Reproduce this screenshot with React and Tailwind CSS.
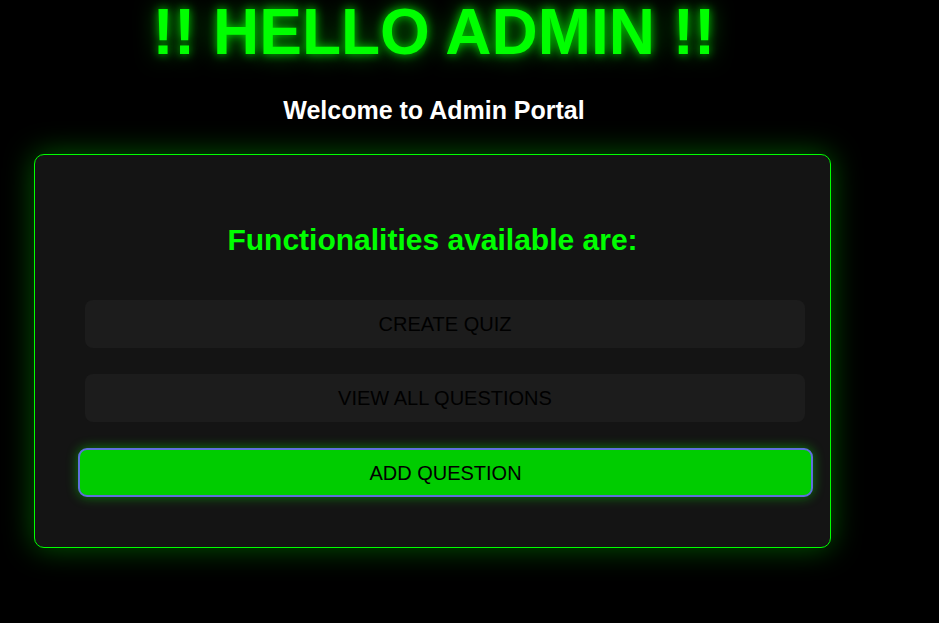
export default function App() {
  return (
    <div className="min-h-screen bg-black font-['Liberation_Sans',Arial,sans-serif]">
      <div className="w-[868px] flex flex-col items-center">
        <h1 className="text-[64px] leading-none font-bold text-[#00ff00] [text-shadow:0_0_10px_rgba(0,255,0,0.75),0_0_22px_rgba(0,255,0,0.5)]">
          !! HELLO ADMIN !!
        </h1>
        <h2 className="mt-[34px] text-[25px] leading-none font-bold text-white">
          Welcome to Admin Portal
        </h2>
      </div>
      <div className="ml-[34px] mt-[31px] w-[797px] h-[394px] border border-[#00ff00] rounded-[10px] bg-[#141414] shadow-[0_0_30px_rgba(0,255,0,0.35)] pt-[70px] pl-[50px] pr-[25px] flex flex-col">
        <h3 className="-ml-[50px] -mr-[25px] text-center text-[30px] leading-none font-bold text-[#00ff00]">
          Functionalities available are:
        </h3>
        <div className="mt-[45px] flex flex-col">
          <button className="h-[48px] w-[720px] rounded-[8px] bg-[#1c1c1c] text-[20px] text-black">
            CREATE QUIZ
          </button>
          <button className="mt-[26px] h-[48px] w-[720px] rounded-[8px] bg-[#1c1c1c] text-[20px] text-black">
            VIEW ALL QUESTIONS
          </button>
          <button className="mt-[26px] -ml-[7px] h-[49px] w-[735px] rounded-[9px] border-2 border-[#5f6fdc] bg-[#00cc00] text-[20px] text-black shadow-[0_0_12px_rgba(0,255,0,0.45)]">
            ADD QUESTION
          </button>
        </div>
      </div>
    </div>
  );
}
